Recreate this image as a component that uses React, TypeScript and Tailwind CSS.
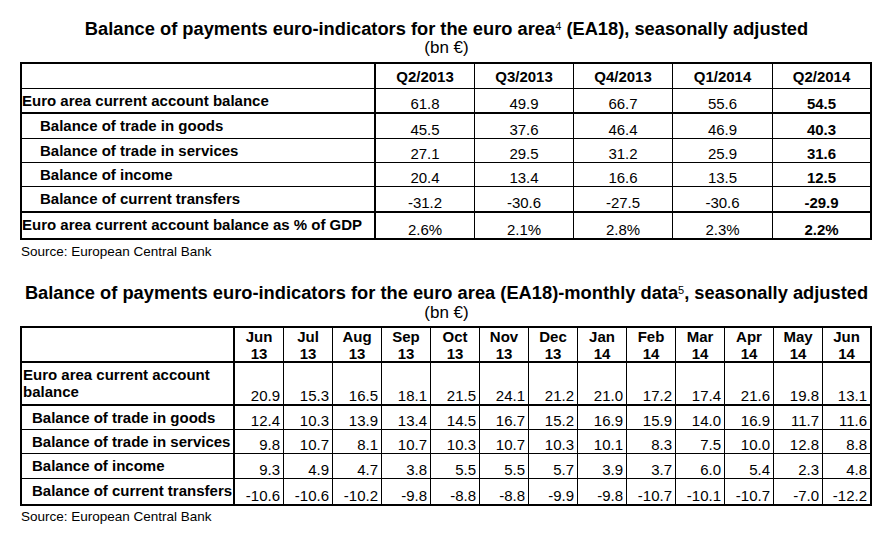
import React from "react";

const quarters = ["Q2/2013", "Q3/2013", "Q4/2013", "Q1/2014", "Q2/2014"];

type Row = { label: string; indent: boolean; vals: string[]; border: string };

const rows1: Row[] = [
  { label: "Euro area current account balance", indent: false, vals: ["61.8", "49.9", "66.7", "55.6", "54.5"], border: "border-b-2" },
  { label: "Balance of trade in goods", indent: true, vals: ["45.5", "37.6", "46.4", "46.9", "40.3"], border: "border-b" },
  { label: "Balance of trade in services", indent: true, vals: ["27.1", "29.5", "31.2", "25.9", "31.6"], border: "border-b" },
  { label: "Balance of income", indent: true, vals: ["20.4", "13.4", "16.6", "13.5", "12.5"], border: "border-b" },
  { label: "Balance of current transfers", indent: true, vals: ["-31.2", "-30.6", "-27.5", "-30.6", "-29.9"], border: "border-b-2" },
  { label: "Euro area current account balance as % of GDP", indent: false, vals: ["2.6%", "2.1%", "2.8%", "2.3%", "2.2%"], border: "" },
];

const months = [
  ["Jun", "13"], ["Jul", "13"], ["Aug", "13"], ["Sep", "13"], ["Oct", "13"], ["Nov", "13"], ["Dec", "13"],
  ["Jan", "14"], ["Feb", "14"], ["Mar", "14"], ["Apr", "14"], ["May", "14"], ["Jun", "14"],
];

const rows2: Row[] = [
  { label: "Euro area current account balance", indent: false, vals: ["20.9", "15.3", "16.5", "18.1", "21.5", "24.1", "21.2", "21.0", "17.2", "17.4", "21.6", "19.8", "13.1"], border: "border-b-2" },
  { label: "Balance of trade in goods", indent: true, vals: ["12.4", "10.3", "13.9", "13.4", "14.5", "16.7", "15.2", "16.9", "15.9", "14.0", "16.9", "11.7", "11.6"], border: "border-b" },
  { label: "Balance of trade in services", indent: true, vals: ["9.8", "10.7", "8.1", "10.7", "10.3", "10.7", "10.3", "10.1", "8.3", "7.5", "10.0", "12.8", "8.8"], border: "border-b" },
  { label: "Balance of income", indent: true, vals: ["9.3", "4.9", "4.7", "3.8", "5.5", "5.5", "5.7", "3.9", "3.7", "6.0", "5.4", "2.3", "4.8"], border: "border-b" },
  { label: "Balance of current transfers", indent: true, vals: ["-10.6", "-10.6", "-10.2", "-9.8", "-8.8", "-8.8", "-9.9", "-9.8", "-10.7", "-10.1", "-10.7", "-7.0", "-12.2"], border: "" },
];

function Table1() {
  return (
    <div className="ml-[20px] w-[852px] border-2 border-black grid grid-cols-[354px_99px_99px_99px_100px_97px] grid-rows-[25px_25px_25px_24px_24px_26px_25px]">
      <div className="border-r-2 border-b border-black" />
      {quarters.map((q, i) => (
        <div
          key={q}
          className={`border-b border-black flex items-center justify-center font-bold text-[15px] leading-[17px] ${i < 4 ? "border-r" : ""}`}
        >
          {q}
        </div>
      ))}
      {rows1.map((r) => (
        <React.Fragment key={r.label}>
          <div
            className={`border-r-2 border-black font-bold text-[15px] leading-[17px] pt-[3px] whitespace-nowrap ${r.border} ${r.indent ? "pl-[18px]" : "pl-[0px]"}`}
          >
            {r.label}
          </div>
          {r.vals.map((v, i) => (
            <div
              key={i}
              className={`border-black flex items-end justify-center text-[15px] leading-[16px] ${r.border} ${i < 4 ? "border-r" : "font-bold"}`}
            >
              {v}
            </div>
          ))}
        </React.Fragment>
      ))}
    </div>
  );
}

function Table2() {
  return (
    <div className="ml-[20px] w-[852px] border-2 border-black grid grid-cols-[213px_49px_49px_49px_49px_49px_49px_49px_49px_49px_49px_49px_49px_47px] grid-rows-[35px_43px_24px_24px_25px_25px]">
      <div className="border-r-2 border-b-2 border-black" />
      {months.map((m, i) => (
        <div
          key={i}
          className={`border-b-2 border-black flex flex-col items-center justify-center font-bold text-[15px] leading-[17px] ${i < 12 ? "border-r" : ""}`}
        >
          <span>{m[0]}</span>
          <span>{m[1]}</span>
        </div>
      ))}
      {rows2.map((r) => (
        <React.Fragment key={r.label}>
          <div
            className={`border-r-2 border-black font-bold text-[15px] leading-[17px] pt-[3px] ${r.border} ${r.indent ? "pl-[10px] whitespace-nowrap" : "pl-[1px]"}`}
          >
            {r.label}
          </div>
          {r.vals.map((v, i) => (
            <div
              key={i}
              className={`border-black flex items-end justify-end pr-[3px] text-[15px] leading-[16px] ${r.border} ${i < 12 ? "border-r" : ""}`}
            >
              {v}
            </div>
          ))}
        </React.Fragment>
      ))}
    </div>
  );
}

export default function App() {
  return (
    <div className="w-[893px] h-[538px] bg-white text-black font-['Liberation_Sans',Arial,sans-serif] overflow-hidden">
      <div className="pt-[18px] text-center font-bold text-[18.3px] leading-[21px] whitespace-nowrap">
        Balance of payments euro-indicators for the euro area
        <sup className="text-[11px] font-normal">4</sup> (EA18), seasonally adjusted
      </div>
      <div className="text-center text-[17px] leading-[18px]">(bn €)</div>
      <div className="mt-[5px]">
        <Table1 />
      </div>
      <div className="mt-[4px] pl-[21px] text-[13.5px] leading-[16px]">Source: European Central Bank</div>

      <div className="mt-[22px] text-center font-bold text-[18.3px] leading-[21px] whitespace-nowrap">
        Balance of payments euro-indicators for the euro area (EA18)-monthly data
        <sup className="text-[11px] font-normal">5</sup>, seasonally adjusted
      </div>
      <div className="mt-[1px] text-center text-[17px] leading-[18px]">(bn €)</div>
      <div className="mt-[4px]">
        <Table2 />
      </div>
      <div className="mt-[3px] pl-[21px] text-[13.5px] leading-[16px]">Source: European Central Bank</div>
    </div>
  );
}
